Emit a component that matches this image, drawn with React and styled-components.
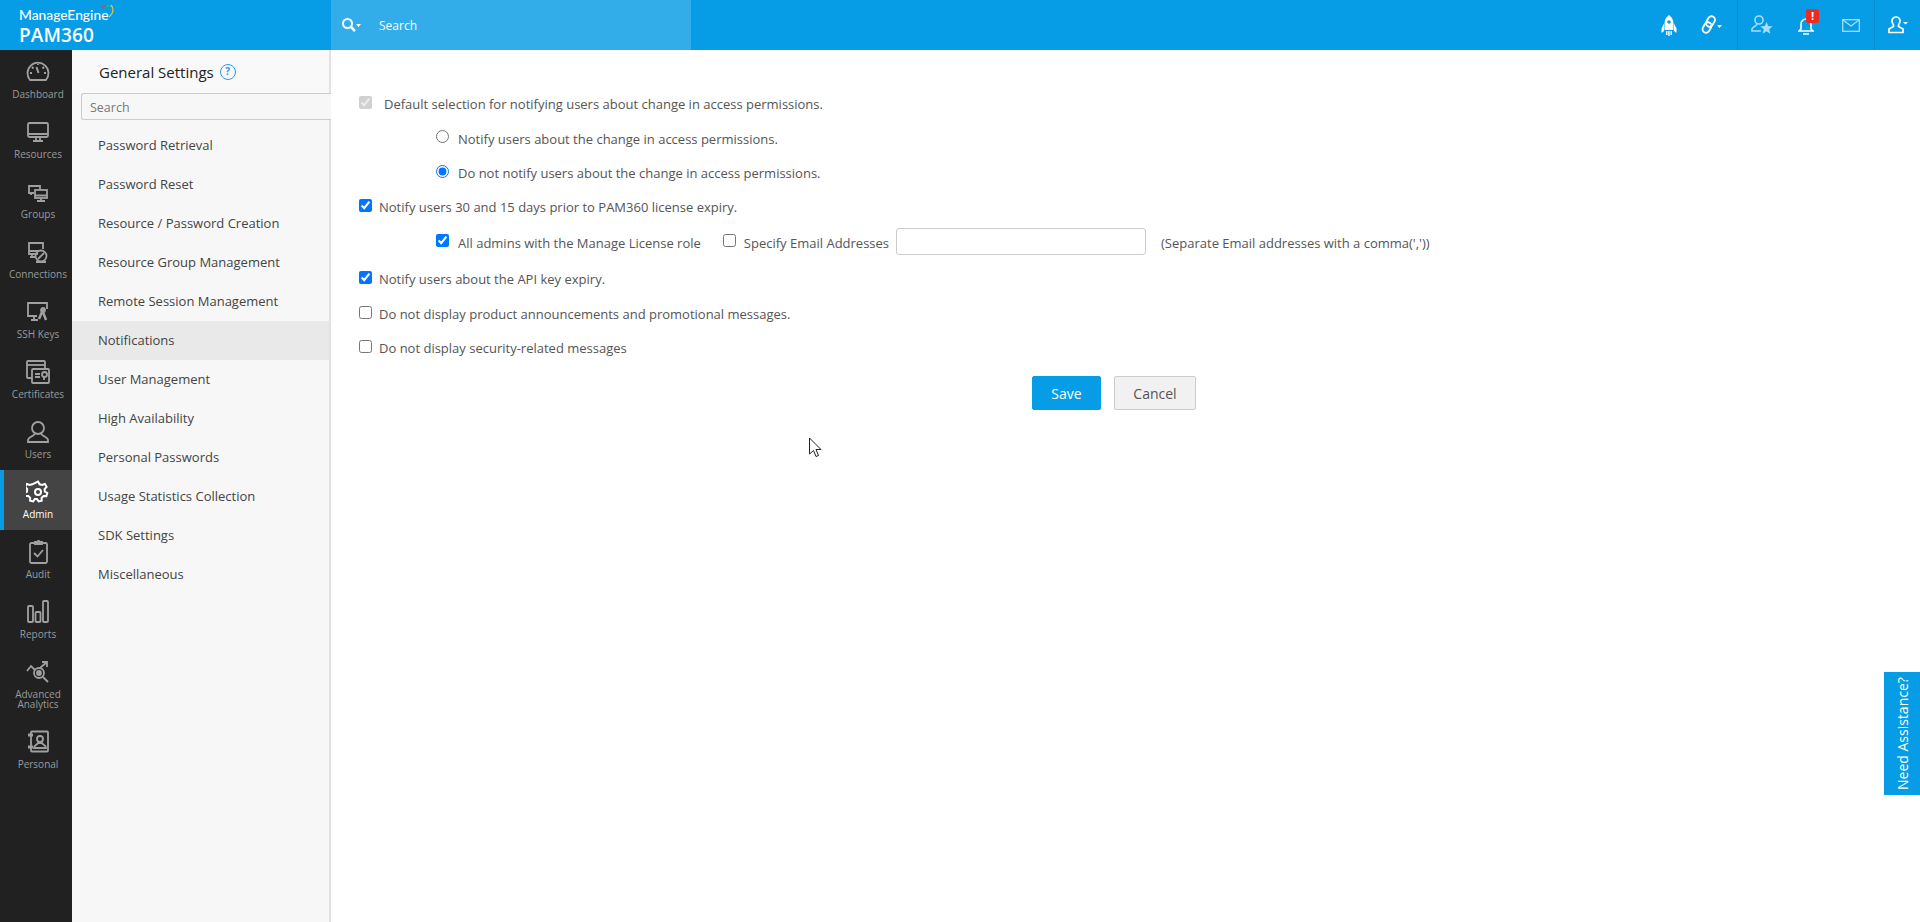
import React from 'react'
import styled, { createGlobalStyle } from 'styled-components'

const GlobalStyle = createGlobalStyle`
  html, body {
    margin: 0;
    padding: 0;
    height: 100%;
    background: white;
    font-family: "Open Sans", "Liberation Sans", sans-serif;
    overflow: hidden;
  }
  * { box-sizing: border-box; }
`

const Page = styled.div`
  width: 1920px;
  height: 922px;
  display: flex;
  flex-direction: column;
  position: relative;
`

const Header = styled.header`
  height: 50px;
  display: flex;
  background-color: #069de6;
  color: white;
`

const Logo = styled.div`
  width: 330px;
  padding: 7px 0 0 19px;
  position: relative;
`

const LogoTop = styled.div`
  font-family: "Lato", "Open Sans", sans-serif;
  font-size: 13.8px;
  font-weight: 500;
  line-height: 16px;
  display: flex;
`

const LogoName = styled.div`
  font-size: 19px;
  font-weight: 600;
  line-height: 24px;
  letter-spacing: 0.1px;
`

const Swoosh = styled.svg`
  position: absolute;
  left: 98px;
  top: 3px;
`

const SearchBar = styled.div`
  width: 360px;
  display: flex;
  align-items: center;
  padding-left: 10px;
  background-color: #33ade9;
  font-size: 12px;
  gap: 17px;
  margin-left: 1px;
`

const HeaderIcons = styled.div`
  flex: 1;
  display: flex;
  justify-content: flex-end;
`

const IconGroup = styled.div`
  display: flex;
  align-items: center;
  height: 50px;
  width: ${({$w}) => $w}px;
  border-left: ${({$line}) => $line ? '1px solid #0a8dd0' : 'none'};
`

const IconSlot = styled.div`
  position: relative;
  width: ${({$w}) => $w}px;
  display: flex;
  justify-content: center;
`

const Badge = styled.span`
  position: absolute;
  left: 8px;
  top: -7px;
  width: 13px;
  height: 14px;
  background: #ee2a24;
  border-radius: 2px;
  color: white;
  font-size: 11px;
  font-weight: 700;
  line-height: 14px;
  text-align: center;
`

const Body = styled.div`
  flex: 1;
  display: flex;
  min-height: 0;
`

const Sidebar = styled.nav`
  width: 72px;
  background-color: #212121;
`

const SideItem = styled.div`
  height: ${({$tall}) => $tall ? 70 : 60}px;
  display: flex;
  flex-direction: column;
  align-items: center;
  padding: 10px 0 0 4px;
  color: ${({$active}) => $active ? 'white' : '#9a9a9a'};
  background-color: ${({$active}) => $active ? '#444' : 'transparent'};
  box-shadow: ${({$active}) => $active ? 'inset 4px 0 0 #069de6' : 'none'};
`

const SideIcon = styled.svg`
  width: 24px;
  height: 24px;
  fill: none;
  stroke: ${({$active}) => $active ? 'white' : '#a0a0a0'};
  stroke-width: 1.8;
  flex-shrink: 0;
`

const SideLabel = styled.span`
  margin-top: 5px;
  font-size: 10px;
  line-height: 10px;
  text-align: center;
  white-space: pre-line;
`

const SubNav = styled.aside`
  width: 259px;
  background-color: #f7f7f7;
  border-right: 2px solid #e2e2e2;
`

const SubTitle = styled.div`
  height: 43px;
  display: flex;
  align-items: center;
  gap: 6px;
  padding: 0 0 0 27px;
  font-size: 15px;
  color: #222;
  background: #f9f9f9;
`

const HelpMark = styled.span`
  width: 16px;
  height: 16px;
  border: 1.5px solid #2b9ae6;
  border-radius: 50%;
  color: #2b9ae6;
  font-size: 10px;
  font-weight: 700;
  line-height: 13px;
  text-align: center;
`

const SubSearch = styled.input`
  display: block;
  margin-left: 9px;
  width: 250px;
  height: 27px;
  padding: 1px 8px 0;
  border: 1px solid #ccc;
  border-right: none;
  border-radius: 3px 0 0 3px;
  background: #f7f7f7;
  font-family: inherit;
  font-size: 12.5px;
  &::placeholder { color: #777; opacity: 1; }
`

const SubList = styled.div`
  margin-top: 6px;
`

const SubItem = styled.div`
  height: 39px;
  line-height: 38px;
  padding-left: 26px;
  font-size: 13px;
  color: #444;
  background-color: ${({$active}) => $active ? '#e9e9e9' : 'transparent'};
`

const Main = styled.main`
  flex: 1;
  padding: 37px 0 0 28px;
  font-size: 13px;
  color: #555;
`

const Row = styled.div`
  height: ${({$h}) => $h}px;
  display: flex;
  align-items: center;
  padding-left: ${({$indent}) => $indent ? 77 : 0}px;
`

const Box = styled.input`
  width: 13px;
  height: 13px;
  margin: 0 7px 0 0;
  flex-shrink: 0;
  position: relative;
  top: -2px;
`

const Label = styled.label`
  margin-right: ${({$mr}) => $mr || 0}px;
  margin-left: ${({$ml}) => $ml || 0}px;
  white-space: nowrap;
`

const EmailInput = styled.input`
  width: 250px;
  height: 27px;
  margin: -2px 15px 0 7px;
  border: 1px solid #ccc;
  border-radius: 3px;
  background: white;
`

const Actions = styled.div`
  display: flex;
  gap: 13px;
  margin: 11px 0 0 673px;
`

const Button = styled.button`
  height: 34px;
  width: ${({$primary}) => $primary ? 69 : 82}px;
  border: 1px solid ${({$primary}) => $primary ? '#069de6' : '#ccc'};
  border-radius: 2px;
  background-color: ${({$primary}) => $primary ? '#069de6' : '#f1f1f1'};
  color: ${({$primary}) => $primary ? 'white' : '#555'};
  font-family: inherit;
  font-size: 14px;
`

const Assist = styled.div`
  position: absolute;
  right: 0;
  top: 672px;
  width: 36px;
  height: 123px;
  background-color: #069de6;
  color: white;
  font-family: "Open Sans", sans-serif;
  font-size: 14px;
  display: flex;
  align-items: center;
  justify-content: center;
  writing-mode: vertical-rl;
  transform: rotate(180deg);
`

const Cursor = styled.svg`
  position: absolute;
  left: 808px;
  top: 437px;
`

const icons = {
  dashboard: <><path d="M4 20a10.500 10.500 0 1 1 16 0z" /><path d="M12.500 13 10.500 7" strokeWidth="2" /><path d="M4 13h2M18 13h2M6 7l1.500 1.500M18 7l-1.500 1.500M12 4v1" /></>,
  resources: <><rect x="2" y="3" width="20" height="14" rx="1.500" /><path d="M2 14h20M10 17v3M14 17v3M7 21h10" /></>,
  groups: <><path d="M8 13H3V6h11v3" /><rect x="9" y="10" width="12" height="8" /><path d="M9 15.500h12M15 18v2M11 21h8M5 13v2" /></>,
  connections: <><path d="M12 14H3V3h14v6" /><path d="M3 11h10M6 14v3M4 17h6" /><circle cx="15" cy="16" r="5.500" /><path d="M12 19l6-6M10 22h10" /></>,
  ssh: <><path d="M11 16H2V3h19v6" /><path d="M8 16v3M5 20h7" /><circle cx="17" cy="10" r="2" fill="#9a9a9a" /><path d="M16 12l-3 7M17 12l3 8" strokeWidth="2.500" /></>,
  certificates: <><rect x="1" y="1" width="18" height="17" rx="1" /><path d="M1 5h18" /><rect x="6" y="9" width="17" height="14" rx="1" fill="#212121" /><path d="M9 14h5M9 17h5" /><circle cx="18.500" cy="14.500" r="2.500" /><path d="M18 17v3" /></>,
  users: <><circle cx="12" cy="8" r="6" /><path d="M9 13c0 3-7 4-7 7v2h20v-2c0-3-7-4-7-7" /></>,
  admin: <><path d="M12 1.500l1.600 2.800 2.500.7 2.800-1 1.700 2.800-2 2.200.2 2.600 2.500 1.400-.9 3.100-2.900-.1-1.900 1.900.1 2.900-3.100.6-1.600-2.400h-2.200l-1.600 2.400-3.100-.6.1-2.900-1.900-1.900-2.900.1-.9-3.100 2.500-1.400.2-2.600-2-2.200 1.700-2.800 2.800 1 2.500-.7z" strokeWidth="2" /><circle cx="12" cy="12" r="3" strokeWidth="2" /></>,
  audit: <><rect x="4" y="3" width="17" height="20" rx="1.500" /><path d="M9 4V2h2l1.500-1.500L14 2h2v2z" /><path d="M8 13l3.500 3.500L17 10" /></>,
  reports: <><rect x="2" y="6" width="5" height="16" rx="1" /><rect x="9.500" y="12" width="5" height="10" rx="1" /><rect x="17" y="1" width="5" height="21" rx="1" /></>,
  analytics: <><circle cx="13" cy="13" r="5" /><circle cx="13" cy="13" r="2" fill="#9a9a9a" /><path d="M17 17l5 5M1 11l4-5 4 4M14 8l7-6M16 2h5v5" /></>,
  personal: <><rect x="5" y="1.500" width="17" height="20" rx="1" /><circle cx="14" cy="9" r="3" /><path d="M8 18c0-3 3-3 4-5h4c1 2 4 2 4 5z" /><path d="M2 5h5M2 17h5" strokeWidth="3" /></>,
}

const sideItems = [
  ['dashboard', 'Dashboard'],
  ['resources', 'Resources'],
  ['groups', 'Groups'],
  ['connections', 'Connections'],
  ['ssh', 'SSH Keys'],
  ['certificates', 'Certificates'],
  ['users', 'Users'],
  ['admin', 'Admin', true],
  ['audit', 'Audit'],
  ['reports', 'Reports'],
  ['analytics', 'Advanced\nAnalytics'],
  ['personal', 'Personal'],
]

const subItems = [
  'Password Retrieval',
  'Password Reset',
  'Resource / Password Creation',
  'Resource Group Management',
  'Remote Session Management',
  'Notifications',
  'User Management',
  'High Availability',
  'Personal Passwords',
  'Usage Statistics Collection',
  'SDK Settings',
  'Miscellaneous',
]

function App() {
  return (
    <Page>
      <GlobalStyle />
      <Header>
        <Logo>
          <LogoTop>ManageEngine</LogoTop>
          <LogoName>PAM360</LogoName>
          <Swoosh width="20" height="20" viewBox="0 0 20 20" fill="none" strokeWidth="1.200">
            <path d="M3 5a7 7 0 0 1 5-2" stroke="#d8433a" />
            <path d="M8 3a7 7 0 0 1 5 1" stroke="#3bb273" />
            <path d="M13 2c3 3 3 8-2 12" stroke="#f2c62f" />
          </Swoosh>
        </Logo>
        <SearchBar>
          <svg width="21" height="16" viewBox="0 0 21 16" fill="none" stroke="white">
            <circle cx="6.500" cy="6.500" r="4.500" strokeWidth="2" />
            <path d="M10 10l4 4" strokeWidth="2.500" />
            <path d="M15 7h5l-2.500 3z" fill="white" stroke="none" />
          </svg>
          Search
        </SearchBar>
        <HeaderIcons>
          <IconGroup $w={117}>
            <IconSlot $w={41} />
            <IconSlot $w={16}>
              <svg width="16" height="21" viewBox="0 0 16 21" fill="white">
                <path d="M8 0c3.500 2.500 4.500 6 4.500 9v6h-9V9C3.500 6 4.500 2.500 8 0z" />
                <path d="M3 8.500.5 13.500V18l2.500-2zM13 8.500l2.500 5V18L13 16zM5 16h1.500v4H5zM7.300 16h1.400v5H7.300zM9.500 16H11v4H9.500z" />
                <circle cx="8" cy="7" r="1.800" fill="#069de6" />
              </svg>
            </IconSlot>
            <IconSlot $w={24} />
            <IconSlot $w={22}>
              <svg width="22" height="20" viewBox="0 0 22 20" fill="none" stroke="white" strokeWidth="1.800">
                <rect x="6" y="1" width="7" height="11" rx="3.500" transform="rotate(30 9.500 6.500)" />
                <rect x="2.500" y="7" width="7" height="11" rx="3.500" transform="rotate(30 6 12.500)" />
                <path d="M16 10h5l-2.500 3z" fill="white" stroke="none" />
              </svg>
            </IconSlot>
          </IconGroup>
          <IconGroup $w={137} $line>
            <IconSlot $w={13} />
            <IconSlot $w={22}>
              <svg width="22" height="20" viewBox="0 0 22 20" fill="none" stroke="#a5def7" strokeWidth="1.600">
                <circle cx="8" cy="5" r="4" />
                <path d="M6 9c0 2-5 3-5 5v2h9" />
                <path d="M15.500 7l1.700 4.100 4.500.3-3.500 2.900 1.100 4.400-3.800-2.400-3.800 2.400 1.100-4.400-3.500-2.900 4.500-.3z" fill="#a5def7" stroke="none" />
              </svg>
            </IconSlot>
            <IconSlot $w={25} />
            <IconSlot $w={16}>
              <svg width="16" height="19" viewBox="0 0 16 19" fill="none" stroke="white" strokeWidth="1.600">
                <path d="M3 13V8a5 5 0 0 1 10 0v5l2 2H1zM5 18h6" />
              </svg>
              <Badge>!</Badge>
            </IconSlot>
            <IconSlot $w={28} />
            <IconSlot $w={18}>
              <svg width="18" height="13" viewBox="0 0 18 13" fill="none" stroke="#a5def7" strokeWidth="1.300">
                <rect x="0.700" y="0.700" width="16.600" height="11.600" />
                <path d="M1 1l8 6 8-6" />
              </svg>
            </IconSlot>
          </IconGroup>
          <IconGroup $w={46} $line>
            <IconSlot $w={46}>
              <svg width="20" height="18" viewBox="0 0 20 18" fill="none" stroke="white" strokeWidth="1.700">
                <path d="M8 1a4 4 0 0 1 4 4c0 3-2 3-1.500 5.500L15 13v3.500H1V13l4.500-2.500C6 8 4 8 4 5a4 4 0 0 1 4-4z" />
                <path d="M15 6h5l-2.500 2.500z" fill="white" stroke="none" />
              </svg>
            </IconSlot>
          </IconGroup>
        </HeaderIcons>
      </Header>
      <Body>
        <Sidebar>
          {sideItems.map(([icon, label, active]) => (
            <SideItem key={icon} $active={active} $tall={icon === 'analytics'}>
              <SideIcon viewBox="0 0 24 24" $active={active}>{icons[icon]}</SideIcon>
              <SideLabel>{label}</SideLabel>
            </SideItem>
          ))}
        </Sidebar>
        <SubNav>
          <SubTitle>General Settings <HelpMark>?</HelpMark></SubTitle>
          <SubSearch placeholder="Search" />
          <SubList>
            {subItems.map(item => (
              <SubItem key={item} $active={item === 'Notifications'}>{item}</SubItem>
            ))}
          </SubList>
        </SubNav>
        <Main>
          <Row $h={34}>
            <Box type="checkbox" checked disabled readOnly />
            <Label $ml={5}>Default selection for notifying users about change in access permissions.</Label>
          </Row>
          <Row $h={35} $indent>
            <Box type="radio" name="notify" readOnly />
            <Label $ml={2}>Notify users about the change in access permissions.</Label>
          </Row>
          <Row $h={34} $indent>
            <Box type="radio" name="notify" checked readOnly />
            <Label $ml={2}>Do not notify users about the change in access permissions.</Label>
          </Row>
          <Row $h={34}>
            <Box type="checkbox" checked readOnly />
            <Label>Notify users 30 and 15 days prior to PAM360 license expiry.</Label>
          </Row>
          <Row $h={37} $indent>
            <Box type="checkbox" checked readOnly />
            <Label $ml={2} $mr={22}>All admins with the Manage License role</Label>
            <Box type="checkbox" readOnly />
            <Label $ml={1}>Specify Email Addresses</Label>
            <EmailInput />
            <span>(Separate Email addresses with a comma(','))</span>
          </Row>
          <Row $h={36}>
            <Box type="checkbox" checked readOnly />
            <Label>Notify users about the API key expiry.</Label>
          </Row>
          <Row $h={34}>
            <Box type="checkbox" readOnly />
            <Label>Do not display product announcements and promotional messages.</Label>
          </Row>
          <Row $h={34}>
            <Box type="checkbox" readOnly />
            <Label>Do not display security-related messages</Label>
          </Row>
          <Actions>
            <Button $primary>Save</Button>
            <Button>Cancel</Button>
          </Actions>
        </Main>
      </Body>
      <Assist>Need Assistance?</Assist>
      <Cursor width="14" height="22" viewBox="0 0 14 22" fill="white" stroke="#222">
        <path d="M1.500 1v16l4-3.500 2.500 6 2.500-1-2.500-6H13z" />
      </Cursor>
    </Page>
  )
}

export default App
